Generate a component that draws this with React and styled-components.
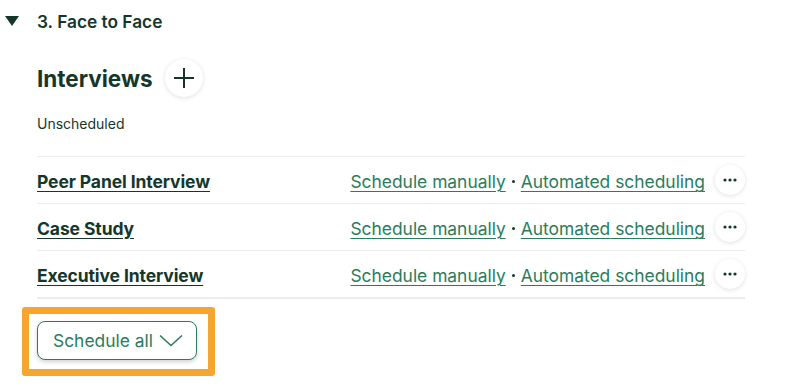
import React from "react";
import styled, { createGlobalStyle } from "styled-components";

const Global = createGlobalStyle`
  html, body { margin: 0; padding: 0; background: #ffffff; }
  body { font-family: Inter, "Noto Sans", sans-serif; color: #173a2c; }
`;

const Page = styled.div`
  width: 793px;
  height: 392px;
  box-sizing: border-box;
  padding-top: 11px;
  overflow: hidden;
`;

const StageHeader = styled.div`
  display: flex;
  align-items: center;
  height: 20px;
`;

const Caret = styled.span`
  width: 0;
  height: 0;
  margin-left: 5px;
  margin-right: 18px;
  border-left: 7px solid transparent;
  border-right: 7px solid transparent;
  border-top: 10px solid #15372b;
`;

const StageTitle = styled.h3`
  margin: 0;
  font-size: 17.3px;
  font-weight: 600;
  color: #15372b;
`;

const Body = styled.div`
  padding-left: 37px;
  width: 708px;
`;

const HeadingRow = styled.div`
  display: flex;
  align-items: center;
  gap: 12px;
  margin-top: 28px;
`;

const Heading = styled.h2`
  margin: 0;
  font-size: 22.5px;
  font-weight: 700;
  color: #15372b;
`;

const RoundButton = styled.button`
  display: flex;
  align-items: center;
  justify-content: center;
  width: ${(p) => p.$size}px;
  height: ${(p) => p.$size}px;
  padding: 0;
  border: none;
  border-radius: 50%;
  background: #fff;
  box-shadow: 0 1px 5px rgba(0, 0, 0, 0.12);
  color: #15372b;
  cursor: pointer;
`;

const SubHeading = styled.div`
  margin-top: 18px;
  font-size: 14px;
  color: #15372b;
`;

const List = styled.div`
  margin-top: 24px;
  border-bottom: 2px solid #ececec;
`;

const Row = styled.div`
  display: flex;
  align-items: center;
  height: 46px;
  border-top: 1px solid #ececec;
`;

const Name = styled.a`
  flex: 1;
  padding-top: 3px;
  font-size: 17.5px;
  font-weight: 700;
  color: #15372b;
  text-decoration: underline;
  text-underline-offset: 3px;
  letter-spacing: -0.1px;
`;

const Links = styled.div`
  display: flex;
  align-items: center;
  gap: 6px;
  margin-right: 10px;
  padding-top: 3px;
`;

const Link = styled.a`
  font-size: 17.4px;
  color: #2a7d5a;
  text-decoration: underline;
  text-decoration-thickness: 1px;
  text-underline-offset: 3px;
`;

const Dot = styled.span`
  width: 3px;
  height: 3px;
  border-radius: 50%;
  background: #15372b;
`;

const Highlight = styled.div`
  display: inline-block;
  margin-top: 8px;
  margin-left: 22px;
  border: 7px solid #f6a62e;
  border-radius: 3px;
  padding: 7px 11px 9px 8px;
`;

const ScheduleAll = styled.button`
  display: flex;
  align-items: center;
  gap: 6px;
  height: 39px;
  width: 160px;
  box-sizing: border-box;
  padding: 0 0 0 15px;
  border: 1px solid #2a7d5a;
  border-radius: 8px;
  background: #fff;
  box-shadow: 0 2px 4px rgba(0, 0, 0, 0.18);
  font-family: inherit;
  font-size: 17.4px;
  color: #2a7d5a;
  cursor: pointer;
`;

const interviews = ["Peer Panel Interview", "Case Study", "Executive Interview"];

export default function App() {
  return (
    <Page>
      <Global />
      <StageHeader>
        <Caret />
        <StageTitle>3. Face to Face</StageTitle>
      </StageHeader>
      <Body>
        <HeadingRow>
          <Heading>Interviews</Heading>
          <RoundButton $size={38} aria-label="Add interview">
            <svg width="22" height="22" viewBox="0 0 22 22" fill="none" stroke="#15372b" strokeWidth="2">
              <path d="M11 1v20M1 11h20" />
            </svg>
          </RoundButton>
        </HeadingRow>
        <SubHeading>Unscheduled</SubHeading>
        <List>
          {interviews.map((n) => (
            <Row key={n}>
              <Name>{n}</Name>
              <Links>
                <Link>Schedule manually</Link>
                <Dot />
                <Link>Automated scheduling</Link>
              </Links>
              <RoundButton $size={30} aria-label="More">
                <svg width="14" height="4" viewBox="0 0 14 4" fill="#15372b">
                  <circle cx="2" cy="2" r="1.6" />
                  <circle cx="7" cy="2" r="1.6" />
                  <circle cx="12" cy="2" r="1.6" />
                </svg>
              </RoundButton>
            </Row>
          ))}
        </List>
      </Body>
      <Highlight>
        <ScheduleAll>
          Schedule all
          <svg width="24" height="14" viewBox="0 0 24 14" fill="none" stroke="#2a7d5a" strokeWidth="1.6">
            <path d="M1 1.5l11 10 11-10" />
          </svg>
        </ScheduleAll>
      </Highlight>
    </Page>
  );
}
